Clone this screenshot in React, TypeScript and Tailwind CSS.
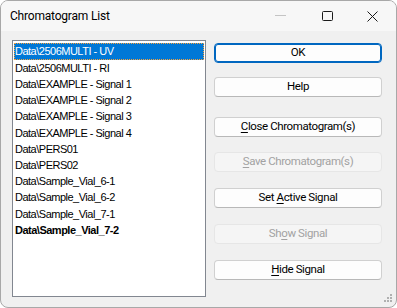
import React from "react";

const items = [
  "Data\\2506MULTI - UV",
  "Data\\2506MULTI - RI",
  "Data\\EXAMPLE - Signal 1",
  "Data\\EXAMPLE - Signal 2",
  "Data\\EXAMPLE - Signal 3",
  "Data\\EXAMPLE - Signal 4",
  "Data\\PERS01",
  "Data\\PERS02",
  "Data\\Sample_Vial_6-1",
  "Data\\Sample_Vial_6-2",
  "Data\\Sample_Vial_7-1",
  "Data\\Sample_Vial_7-2",
];

function Btn({
  pre,
  key_,
  post,
  disabled,
  primary,
  className,
}: {
  pre: string;
  key_?: string;
  post?: string;
  disabled?: boolean;
  primary?: boolean;
  className?: string;
}) {
  const base =
    "flex h-[20px] w-[168px] items-center justify-center rounded-[4px] border text-[11.5px] leading-none tracking-[-0.4px]";
  const look = disabled
    ? "border-[#e6e6e6] bg-[#f5f5f5] text-[#a2a2a2]"
    : primary
    ? "border-[#0067c0] bg-[#fdfdfd] text-black shadow-[inset_0_0_0_1px_#0067c0]"
    : "border-[#d0d0d0] border-b-[#b8b8b8] bg-[#fdfdfd] text-black";
  return (
    <div className={`${base} ${look} ${className ?? ""}`}>
      <span>
        {pre}
        {key_ && <span className="underline underline-offset-2">{key_}</span>}
        {post}
      </span>
    </div>
  );
}

export default function App() {
  return (
    <div
      className="flex h-[308px] w-[397px] flex-col overflow-hidden rounded-[8px] border border-[#a8a8a8] bg-[#f0f0f0]"
      style={{ fontFamily: "Roboto, 'Liberation Sans', sans-serif" }}
    >
      {/* title bar */}
      <div className="flex h-[30px] shrink-0 items-center bg-[#f7f7f7]">
        <span className="pl-[9px] text-[12px] tracking-[-0.2px] text-black">Chromatogram List</span>
        <div className="ml-auto flex items-center">
          <svg width="46" height="30" viewBox="0 0 46 30">
            <line x1="17" y1="14.5" x2="28" y2="14.5" stroke="#c4c4c4" strokeWidth="1" />
          </svg>
          <svg width="46" height="30" viewBox="0 0 46 30">
            <rect x="18.5" y="10.5" width="10" height="9" rx="1" fill="none" stroke="#1a1a1a" strokeWidth="1" />
          </svg>
          <svg width="46" height="30" viewBox="0 0 46 30">
            <path d="M17.5 10.5 L27.5 20.5 M27.5 10.5 L17.5 20.5" stroke="#1a1a1a" strokeWidth="1" />
          </svg>
        </div>
      </div>

      {/* body */}
      <div className="relative flex flex-1 pl-[11px] pt-[9px]">
        <div className="h-[257px] w-[194px] border border-[#828790] bg-white px-[1px] pt-[2px]">
          <div
            style={{ fontFamily: "'Liberation Sans', sans-serif" }}
            className="text-[11px] tracking-[-0.5px] text-black"
          >
            {items.map((t, i) => (
              <div
                key={t}
                className={`flex h-[16.2px] items-center pl-[1px] whitespace-nowrap ${
                  i === 0
                    ? "h-[17px] bg-[#0078d7] text-white outline-1 outline-dotted outline-offset-[-1px] outline-[#f7a13a]"
                    : ""
                } ${i === items.length - 1 ? "font-bold" : ""}`}
              >
                {t}
              </div>
            ))}
          </div>
        </div>

        <div className="ml-[8px] flex flex-col pt-[3px]">
          <Btn pre="OK" primary />
          <Btn pre="Help" className="mt-[14px]" />
          <Btn pre="" key_="C" post="lose Chromatogram(s)" className="mt-[20px]" />
          <Btn pre="" key_="S" post="ave Chromatogram(s)" disabled className="mt-[15px]" />
          <Btn pre="Set " key_="A" post="ctive Signal" className="mt-[16px]" />
          <Btn pre="Sh" key_="o" post="w Signal" disabled className="mt-[16px]" />
          <Btn pre="" key_="H" post="ide Signal" className="mt-[16px]" />
        </div>

        <svg className="absolute bottom-[4px] right-[3px]" width="9" height="9" viewBox="0 0 9 9">
          <rect x="6" y="0" width="2" height="2" fill="#b0b0b0" />
          <rect x="3" y="3" width="2" height="2" fill="#b0b0b0" />
          <rect x="6" y="3" width="2" height="2" fill="#b0b0b0" />
          <rect x="0" y="6" width="2" height="2" fill="#b0b0b0" />
          <rect x="3" y="6" width="2" height="2" fill="#b0b0b0" />
          <rect x="6" y="6" width="2" height="2" fill="#b0b0b0" />
        </svg>
      </div>
    </div>
  );
}
